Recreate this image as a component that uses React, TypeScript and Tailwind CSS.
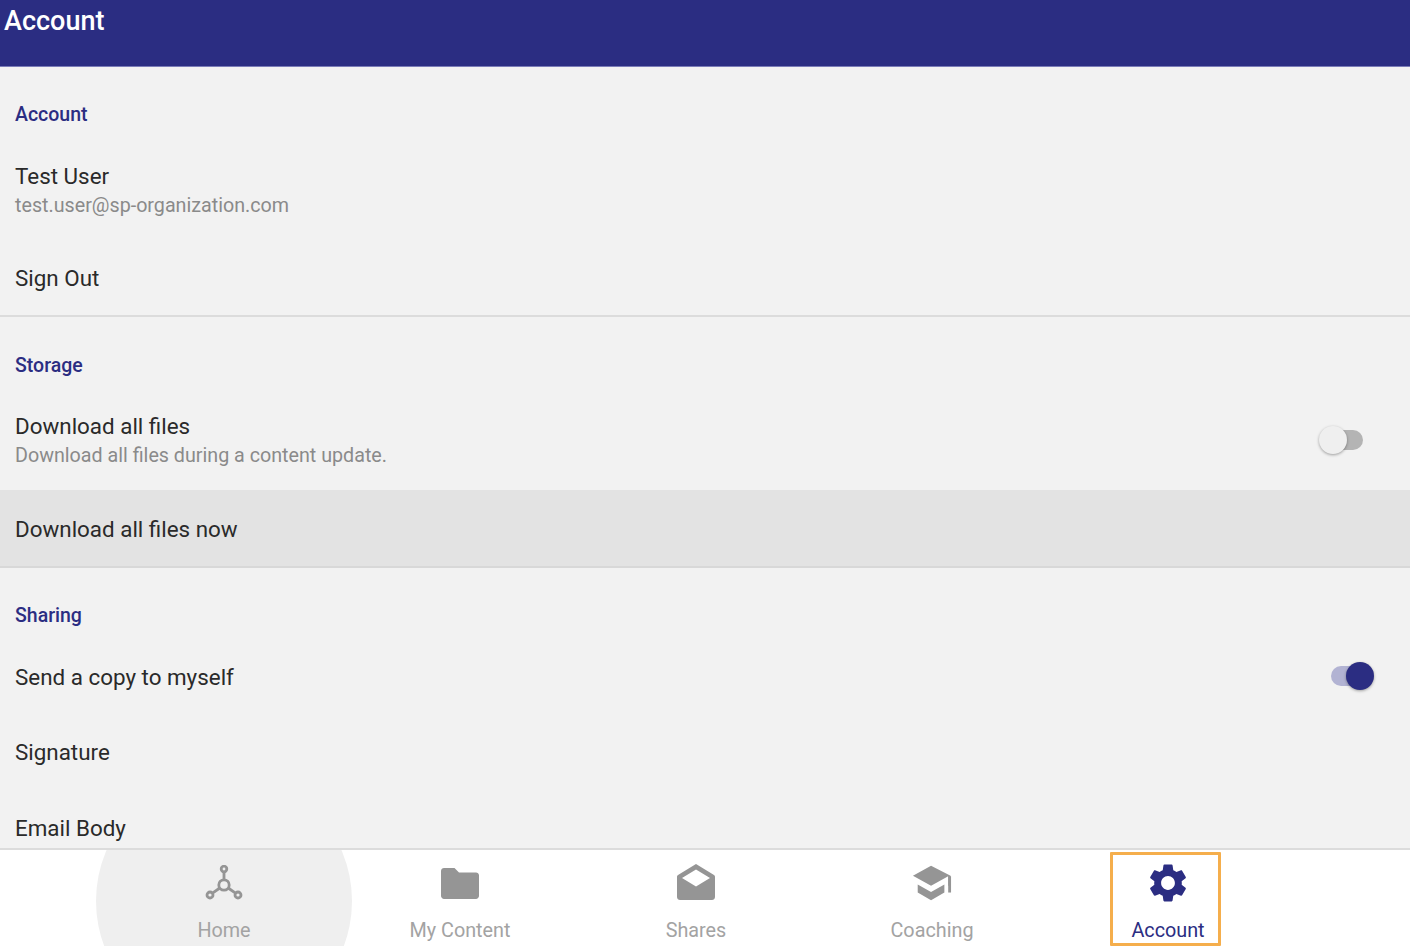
import React from "react";

const navy = "#2b2d82";

function Heading({ children, className }: { children: React.ReactNode; className: string }) {
  return (
    <div className={`px-[15px] flex items-center text-[19.5px] leading-[24px] font-medium text-[#2b2d82] ${className}`}>
      {children}
    </div>
  );
}

function Row({ title, sub, right, className }: { title: string; sub?: string; right?: React.ReactNode; className: string }) {
  return (
    <div className={`flex items-center justify-between pl-[15px] ${className}`}>
      <div className="flex flex-col">
        <div className="text-[22.4px] leading-[28px] text-[#2a2a2a]">{title}</div>
        {sub && <div className="text-[19.7px] leading-[26px] mt-[3px] text-[#8a8a8a]">{sub}</div>}
      </div>
      {right}
    </div>
  );
}

function SwitchOff() {
  return (
    <div className="relative w-[44px] h-[20px] mr-[47px] mb-[1px]">
      <div className="absolute left-[14px] top-0 w-[30px] h-[20px] rounded-full bg-[#b4b4b4]" />
      <div className="absolute left-0 top-[-4px] w-[28px] h-[28px] rounded-full bg-[#efefef] shadow-[0_1px_3px_rgba(0,0,0,0.35)]" />
    </div>
  );
}

function SwitchOn() {
  return (
    <div className="relative w-[44px] h-[20px] mr-[35px] mb-[2px]">
      <div className="absolute left-0 top-0 w-[30px] h-[20px] rounded-full bg-[#b2b3d3]" />
      <div className="absolute left-[15px] top-[-4px] w-[28px] h-[28px] rounded-full bg-[#2b2d82] shadow-[0_1px_3px_rgba(0,0,0,0.35)]" />
    </div>
  );
}

function Tab({ label, icon, active, children }: { label: string; icon: React.ReactNode; active?: boolean; children?: React.ReactNode }) {
  return (
    <div className="relative w-[236px] h-full flex flex-col items-center shrink-0">
      {children}
      <div className="relative h-[40px] w-[40px] mt-[13px] flex items-center justify-center">{icon}</div>
      <div className={`relative mt-[16px] text-[19.8px] leading-[24px] ${active ? "text-[#2b2d82]" : "text-[#a3a3a3]"}`}>{label}</div>
    </div>
  );
}

const grey = "#959595";

const HomeIcon = (
  <svg width="38" height="36" viewBox="0 0 38 36" fill="none" stroke={grey} strokeWidth="2.8">
    <circle cx="19" cy="20" r="5.2" />
    <circle cx="19" cy="4" r="2.8" />
    <circle cx="5" cy="30" r="3" />
    <circle cx="33" cy="30" r="3" />
    <path d="M19 7V14.5M14.8 23L7.5 28.2M23.2 23L30.5 28.2" />
  </svg>
);

const FolderIcon = (
  <svg width="38" height="32" viewBox="0 0 38 32" fill={grey}>
    <path d="M3 1H13.5L18 5.5H35C36.5 5.5 38 6.7 38 8.2V29C38 30.5 36.5 32 35 32H3C1.5 32 0 30.5 0 29V4C0 2.3 1.5 1 3 1Z" />
  </svg>
);

const ShareIcon = (
  <svg width="38" height="38" viewBox="0 0 38 38" fill={grey}>
    <path fillRule="evenodd" d="M19 0L37 11C37.7 11.5 38 12 38 13V33C38 35 36.5 36 35 36H3C1.5 36 0 35 0 33V13C0 12 .3 11.5 1 11ZM19 5.5L5 14L19 22.5L33 14Z" />
  </svg>
);

const CapIcon = (
  <svg width="42" height="36" viewBox="0 0 42 36" fill={grey}>
    <path d="M19 0L0 10.5L19 21L37 11V21H39.5V10.5Z" transform="translate(1 0)" />
    <path d="M6 19.5V28L20 36L34 28V19.5L20 27.5Z" />
    <rect x="38" y="11" width="3" height="17" />
  </svg>
);

const GearIcon = (
  <svg width="46" height="46" viewBox="0 0 24 24" fill={navy} className="shrink-0">
    <path d="M19.14 12.94c.04-.3.06-.61.06-.94 0-.32-.02-.64-.07-.94l2.03-1.58c.18-.14.23-.41.12-.61l-1.92-3.32c-.12-.22-.37-.29-.59-.22l-2.39.96c-.5-.38-1.03-.7-1.62-.94l-.36-2.54c-.04-.24-.24-.41-.48-.41h-3.84c-.24 0-.43.17-.47.41l-.36 2.54c-.59.24-1.13.57-1.62.94l-2.39-.96c-.22-.08-.47 0-.59.22L2.74 8.87c-.12.21-.08.47.12.61l2.03 1.58c-.05.3-.09.63-.09.94s.02.64.07.94l-2.03 1.58c-.18.14-.23.41-.12.61l1.92 3.32c.12.22.37.29.59.22l2.39-.96c.5.38 1.03.7 1.62.94l.36 2.54c.05.24.24.41.48.41h3.84c.24 0 .44-.17.47-.41l.36-2.54c.59-.24 1.13-.56 1.62-.94l2.39.96c.22.08.47 0 .59-.22l1.92-3.32c.12-.22.07-.47-.12-.61l-2.01-1.58zM12 15.6c-1.98 0-3.6-1.62-3.6-3.6s1.62-3.6 3.6-3.6 3.6 1.62 3.6 3.6-1.62 3.6-3.6 3.6z" />
  </svg>
);

export default function App() {
  return (
    <div className="w-[1410px] h-[946px] flex flex-col overflow-hidden bg-[#f2f2f2] font-['Roboto',sans-serif]">
      <header className="h-[67px] shrink-0 bg-[#2b2d82] border-b border-[#7a7cb8] pl-[4px] pt-[3px] text-white text-[27px] leading-[36px] font-medium">
        Account
      </header>
      <main className="flex-1 min-h-0 overflow-hidden flex flex-col">
        <Heading className="h-[94px] pt-[2px]">Account</Heading>
        <Row className="h-[62px] pb-[3px]" title="Test User" sub="test.user@sp-organization.com" />
        <Row className="h-[94px] pt-[17px] border-b-2 border-[#dcdcdc]" title="Sign Out" />
        <Heading className="h-[94px] pt-[4px]">Storage</Heading>
        <Row className="h-[60px] pb-[1px]" title="Download all files" sub="Download all files during a content update." right={<SwitchOff />} />
        <Row className="h-[78px] mt-[19px] pt-[2px] bg-[#e3e3e3] border-b-2 border-[#d8d8d8]" title="Download all files now" />
        <Heading className="h-[94px] pt-[2px]">Sharing</Heading>
        <Row className="h-[32px] pb-[2px]" title="Send a copy to myself" right={<SwitchOn />} />
        <Row className="h-[42px] mt-[37px]" title="Signature" />
        <Row className="h-[40px] mt-[35px]" title="Email Body" />
      </main>
      <nav className="h-[98px] shrink-0 bg-white border-t-2 border-[#dcdcdc] pl-[106px] flex overflow-hidden relative">
        <Tab label="Home" icon={HomeIcon}>
          <div className="absolute left-[-10px] top-[-77px] w-[256px] h-[256px] rounded-full bg-[#efefef]" />
        </Tab>
        <Tab label="My Content" icon={FolderIcon} />
        <Tab label="Shares" icon={ShareIcon} />
        <Tab label="Coaching" icon={CapIcon} />
        <Tab label="Account" icon={GearIcon} active>
          <div className="absolute left-[60px] top-[2px] bottom-0 w-[111px] border-[3px] border-[#f5ae4c] rounded-[1px]" />
        </Tab>
      </nav>
    </div>
  );
}
